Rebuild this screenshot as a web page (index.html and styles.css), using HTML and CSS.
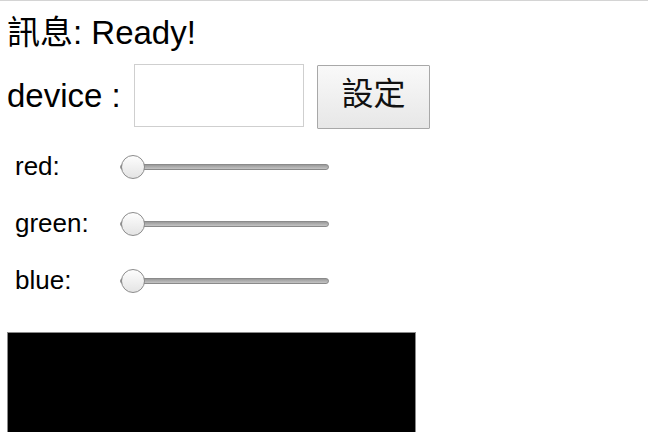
FILE: index.html
```html
<!DOCTYPE html>
<html>
<head>
<meta charset="utf-8">
<link rel="stylesheet" href="styles.css">
</head>
<body>
<div class="page">
  <div class="status">訊息: Ready!</div>
  <div class="device-row">
    <label class="device-label" for="dev">device :</label>
    <input id="dev" class="device-input" type="text">
    <button class="set-btn">設定</button>
  </div>
  <div class="sliders">
    <div class="slider-row"><span class="slider-label">red:</span><input class="slider" type="range" min="0" max="255" value="0"></div>
    <div class="slider-row"><span class="slider-label">green:</span><input class="slider" type="range" min="0" max="255" value="0"></div>
    <div class="slider-row"><span class="slider-label">blue:</span><input class="slider" type="range" min="0" max="255" value="0"></div>
  </div>
  <div class="swatch"></div>
</div>
</body>
</html>
```

FILE: styles.css
```css
html, body {
  margin: 0;
  padding: 0;
  background: #fff;
  overflow: hidden;
}
.page {
  border-top: 1px solid #d4d4d4;
  height: 431px;
  padding: 0 7px;
  font-family: "Liberation Sans", "Noto Sans CJK TC", sans-serif;
  color: #000;
}
.status {
  margin-top: 14px;
  font-size: 33px;
  line-height: 36px;
  height: 36px;
}
.device-row {
  display: flex;
  align-items: flex-start;
  margin-top: 13px;
}
.device-label {
  flex: 0 0 127px;
  font-size: 33px;
  line-height: 63px;
}
.device-input {
  box-sizing: border-box;
  width: 170px;
  height: 63px;
  margin: 0;
  border: 1px solid #cfcfcf;
  background: #fff;
  padding: 0 6px;
  font-size: 24px;
  outline: none;
}
.set-btn {
  box-sizing: border-box;
  width: 113px;
  height: 64px;
  margin: 1px 0 0 13px;
  border: 1px solid #a8a8a8;
  border-radius: 1px;
  background: linear-gradient(#f9f9f9, #e7e7e7);
  font-family: "Liberation Sans", "Noto Sans CJK TC", sans-serif;
  font-size: 32px;
  line-height: 40px;
  color: #111;
  padding: 0 0 7px;
}
.sliders {
  margin-top: 9px;
}
.slider-row {
  display: flex;
  align-items: center;
  height: 57px;
}
.slider-label {
  box-sizing: border-box;
  flex: 0 0 113px;
  padding-left: 8px;
  font-size: 26px;
}
.slider {
  -webkit-appearance: none;
  appearance: none;
  width: 209px;
  height: 24px;
  margin: 0;
  padding: 0;
  background: transparent;
}
.slider::-webkit-slider-runnable-track {
  height: 6px;
  box-sizing: border-box;
  border: 1px solid #8a8a8a;
  border-radius: 3px;
  background: linear-gradient(#9a9a9a, #c4c4c4);
}
.slider::-webkit-slider-thumb {
  -webkit-appearance: none;
  appearance: none;
  box-sizing: border-box;
  width: 24px;
  height: 24px;
  margin-top: -10px;
  border-radius: 50%;
  border: 1px solid #8c8c8c;
  background: linear-gradient(#fdfdfd, #e4e4e4);
}
.swatch {
  box-sizing: border-box;
  margin-top: 23px;
  width: 409px;
  height: 120px;
  background: #000;
  border: 1px solid #8a8a8a;
  border-bottom: 0;
}
```
